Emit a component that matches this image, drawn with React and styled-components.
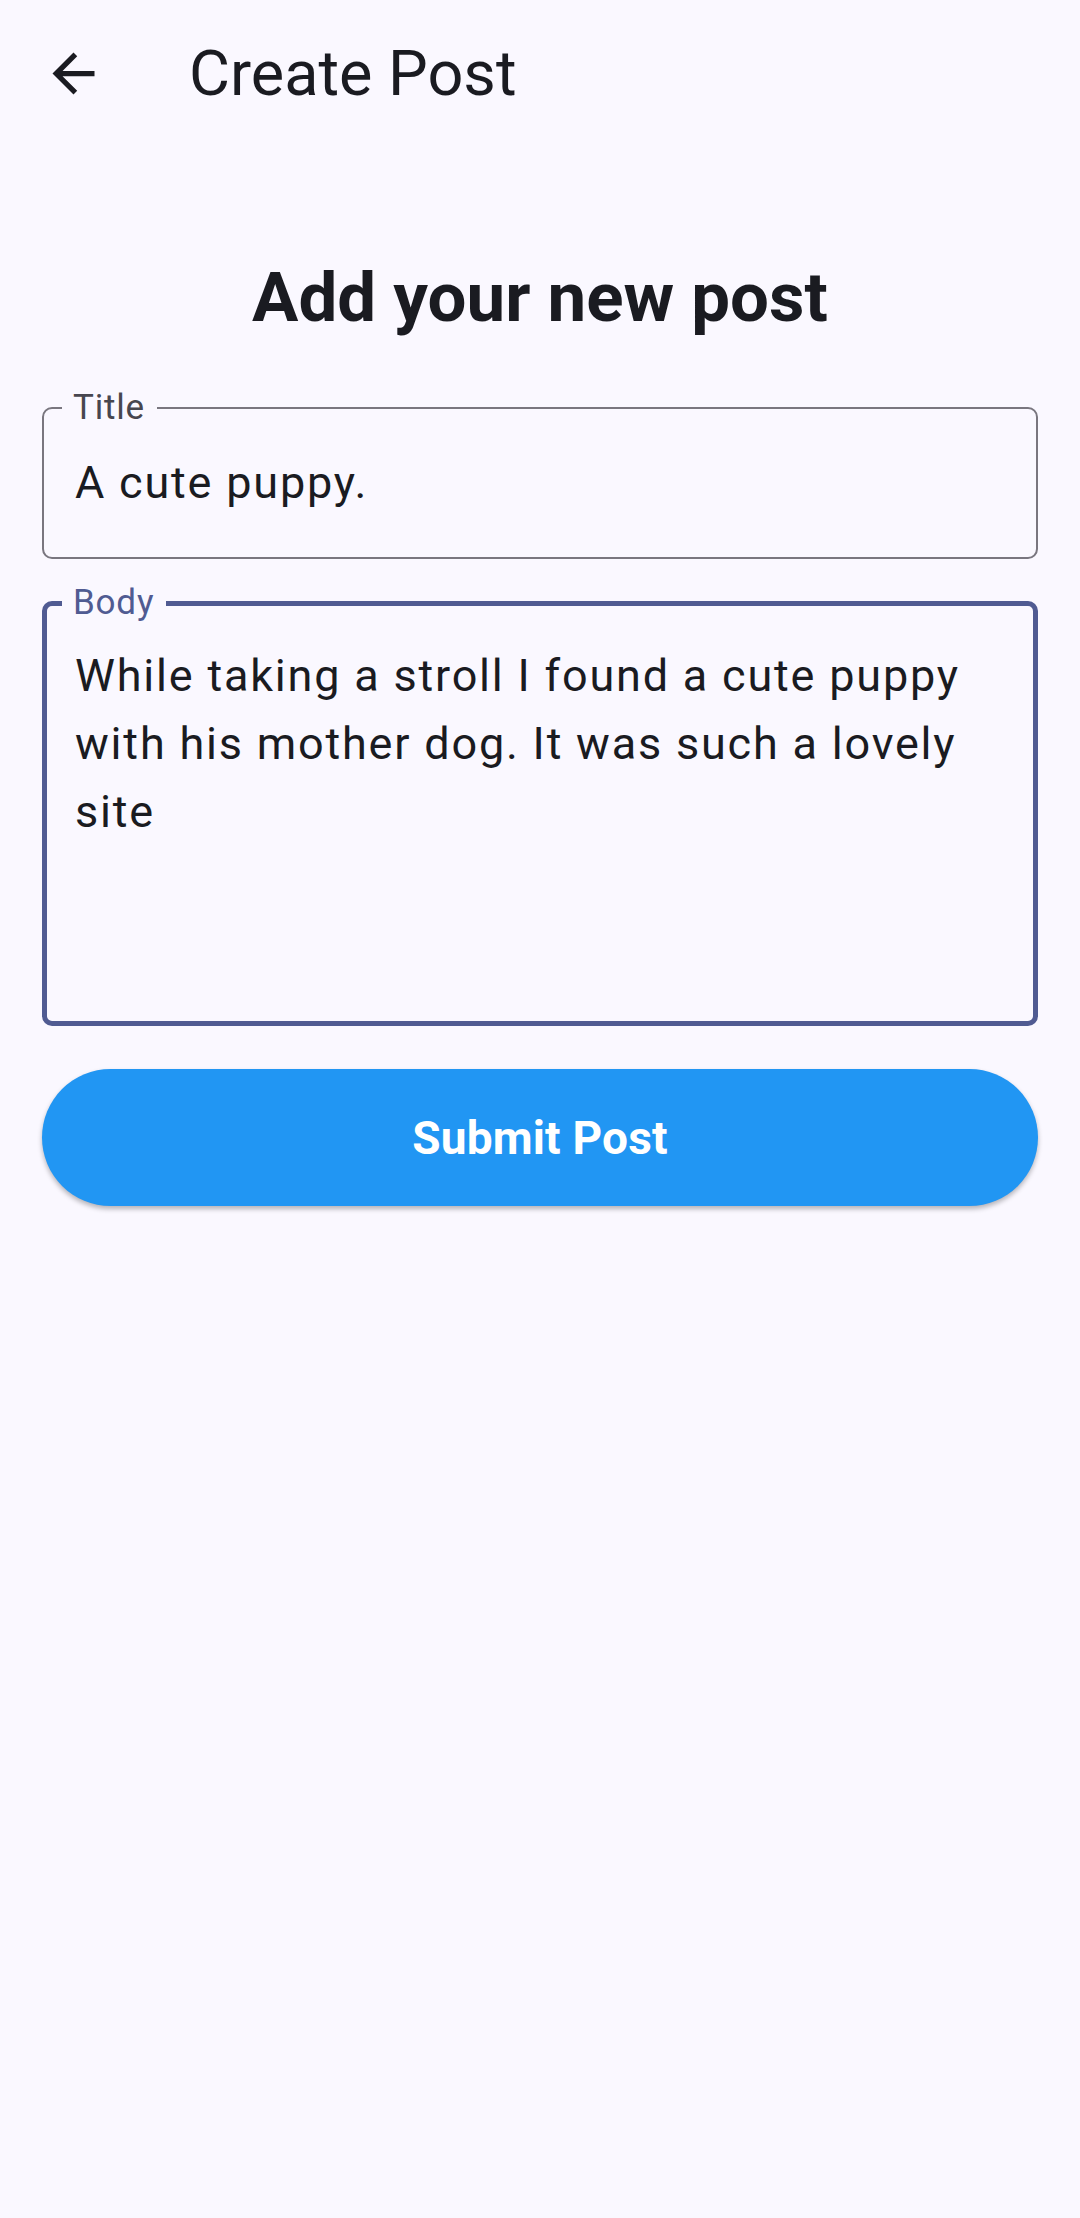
import React from "react";
import styled, { createGlobalStyle } from "styled-components";

const GlobalStyle = createGlobalStyle`
    html, body {
        margin: 0;
        padding: 0;
        background: #faf8ff;
    }

    body {
        font-family: Roboto, "Liberation Sans", sans-serif;
        color: #1a1b21;
        min-height: 2218px;
    }
`;

const Screen = styled.div`
    width: 1080px;
    min-height: 2218px;
    background: #faf8ff;
`;

const AppBar = styled.header`
    display: flex;
    align-items: center;
    height: 147px;
`;

const Leading = styled.button`
    display: flex;
    align-items: center;
    justify-content: center;
    width: 147px;
    height: 147px;
    padding: 0;
    border: none;
    background: transparent;
    color: #1a1b21;
    cursor: pointer;
`;

const BarTitle = styled.h1`
    margin: 0 0 0 42px;
    font-size: 63px;
    font-weight: 400;
    line-height: 147px;
    color: #1a1b21;
`;

const Content = styled.main`
    display: flex;
    flex-direction: column;
    padding: 108px 42px 0;
`;

const Heading = styled.h2`
    margin: 0 0 66px;
    font-size: 69px;
    font-weight: 700;
    line-height: 86px;
    text-align: center;
    color: #1a1b21;
`;

const Field = styled.div`
    position: relative;
    border: ${props => props.focused ? "5px solid #505b92" : "2px solid #79767f"};
    border-radius: 10px;
    margin-bottom: ${props => props.gap}px;
`;

const FieldLabel = styled.span`
    position: absolute;
    left: ${props => props.focused ? 15 : 18}px;
    top: ${props => props.focused ? -21 : -19}px;
    padding: 0 12px 0 11px;
    background: #faf8ff;
    font-size: 35px;
    line-height: 35px;
    letter-spacing: 0.8px;
    color: ${props => props.focused ? "#505b92" : "#47464f"};
`;

const FieldValue = styled.div`
    padding: ${props => props.focused ? "36px 28px 39px" : "42px 31px 38px"};
    min-height: ${props => props.lines * 68}px;
    font-size: 45px;
    line-height: ${props => props.lines > 1 ? 68 : 64}px;
    letter-spacing: 1.8px;
    color: #1a1b21;
    white-space: pre-wrap;
    word-break: break-word;
`;

const SubmitButton = styled.button`
    height: 137px;
    border: none;
    border-radius: 69px;
    background: #2196f3;
    box-shadow: 0 3px 5px rgba(0, 0, 0, 0.28);
    font-family: Roboto, "Liberation Sans", sans-serif;
    font-size: 46px;
    font-weight: 700;
    letter-spacing: 0.2px;
    color: #ffffff;
    cursor: pointer;
`;

const BackArrow = () => (
    <svg width="63" height="63" viewBox="0 0 24 24" fill="currentColor">
        <path d="M20 11H7.83l5.59-5.59L12 4l-8 8 8 8 1.41-1.41L7.83 13H20v-2z"/>
    </svg>
);

const TextField = props => (
    <Field focused={props.focused} gap={props.gap}>
        <FieldLabel focused={props.focused}>{props.label}</FieldLabel>
        <FieldValue focused={props.focused} lines={props.lines}>{props.value}</FieldValue>
    </Field>
);

const App = () => {
    return (
        <Screen>
            <GlobalStyle/>
            <AppBar>
                <Leading aria-label="Back"><BackArrow/></Leading>
                <BarTitle>Create Post</BarTitle>
            </AppBar>
            <Content>
                <Heading>Add your new post</Heading>
                <TextField label="Title" value="A cute puppy." lines={1} gap={42}/>
                <TextField
                    focused
                    label="Body"
                    value="While taking a stroll I found a cute puppy with his mother dog. It was such a lovely site"
                    lines={5}
                    gap={43}
                />
                <SubmitButton>Submit Post</SubmitButton>
            </Content>
        </Screen>
    )
}

export default App;
